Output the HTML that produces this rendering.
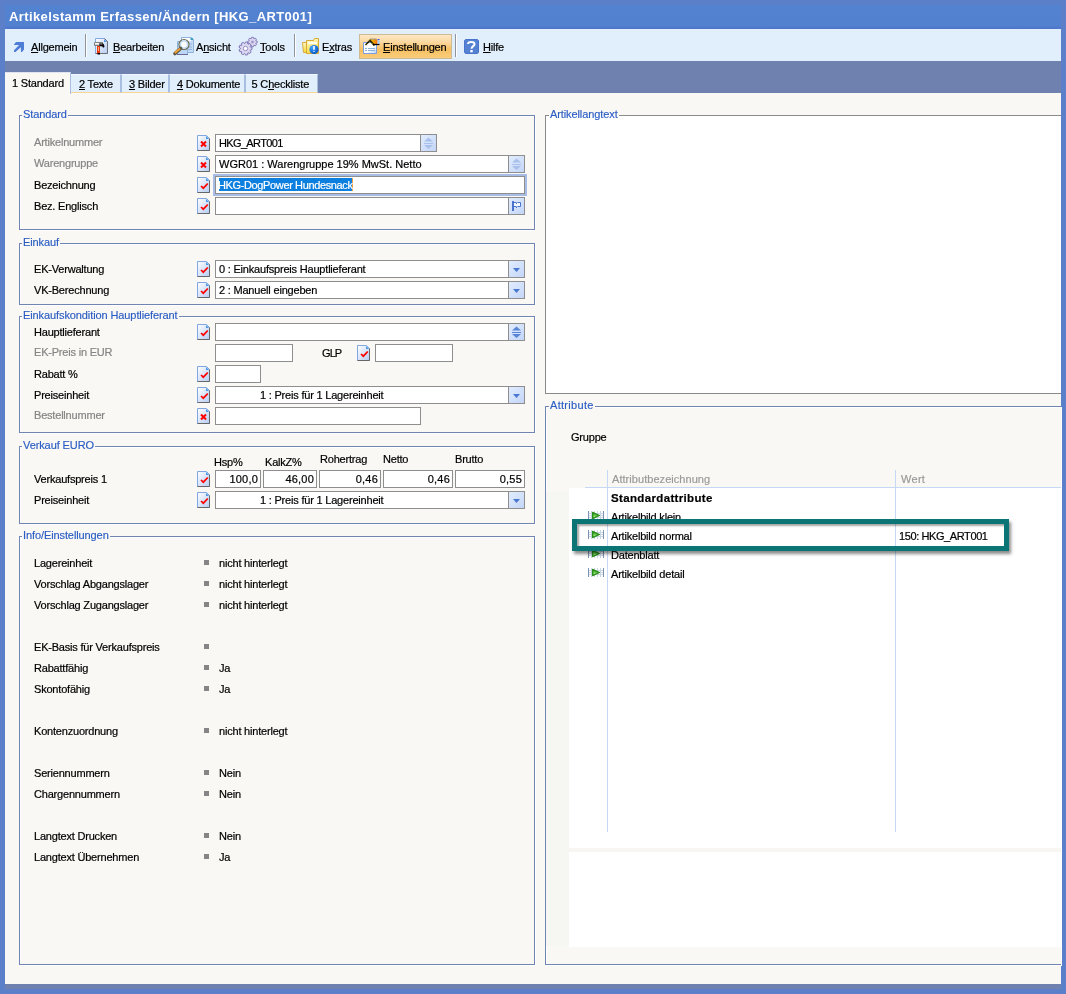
<!DOCTYPE html><html><head><meta charset="utf-8"><style>
*{margin:0;padding:0;box-sizing:border-box}
html,body{width:1066px;height:994px;overflow:hidden;background:#5b7fc8;font-family:"Liberation Sans",sans-serif;font-size:11px;color:#000}
.a{position:absolute}
svg{position:absolute;display:block}
.t{position:absolute;font-size:11px;line-height:13px;white-space:pre;letter-spacing:-0.2px;-webkit-text-stroke:0.2px currentColor}
.g{color:#858585}
.u{text-decoration:underline}
.gb{position:absolute;border:1px solid #7185b3;box-shadow:inset 1px 1px 0 #fff,1px 1px 0 #fff}
.lg{position:absolute;font-size:11px;line-height:13px;white-space:pre;color:#2a5cc4;background:#f9f8f4;padding:0 1px 0 1px;letter-spacing:-0.1px;-webkit-text-stroke:0.15px currentColor}
.in{position:absolute;border:1px solid #8e8e8e;background:#fff;height:18px}
.bt{position:absolute;top:0;right:0;width:16px;height:16px;border-left:1px solid #8e8e8e;background:linear-gradient(135deg,#e2ecfd,#c3d6f8)}
.bul{position:absolute;width:5px;height:5px;background:#858585}
.sep{position:absolute;width:2px;border-left:1px solid #8f949a;border-right:1px solid #fff}
</style></head><body><div id="root" style="position:absolute;left:0;top:0;width:1066px;height:994px;will-change:transform">
<svg width="0" height="0" style="position:absolute"><defs><linearGradient id="dg" x1="0" y1="0" x2="1" y2="1"><stop offset="0" stop-color="#ffffff"/><stop offset="1" stop-color="#b4ccf4"/></linearGradient><linearGradient id="og" x1="0" y1="0" x2="0" y2="1"><stop offset="0" stop-color="#fde3b0"/><stop offset="1" stop-color="#f8c27a"/></linearGradient><radialGradient id="gr" cx="0.3" cy="0.75" r="0.6"><stop offset="0" stop-color="#9cf080"/><stop offset="1" stop-color="#32a01c"/></radialGradient></defs></svg>
<div class="a" style="left:5px;top:5px;width:1056px;height:24px;background:linear-gradient(#5382d0,#5281d0 85%,#4f74cb)"></div>
<div class="a" style="left:9px;top:9px;font-size:13px;font-weight:bold;line-height:16px;color:#fff;letter-spacing:0.4px;white-space:pre">Artikelstamm Erfassen/Ändern [HKG_ART001]</div>
<div class="a" style="left:5px;top:29px;width:1056px;height:32px;background:#e1eefb"></div>
<div class="a" style="left:5px;top:61px;width:1056px;height:32px;background:#6f81ae"></div>
<div class="a" style="left:5px;top:93px;width:1056px;height:891px;background:#f9f8f4"></div>
<div class="a" style="left:5px;top:984px;width:1056px;height:5px;background:#6f81ae"></div>
<div class="a" style="left:359px;top:34px;width:93px;height:25px;border:1px solid #cdbb96;background:linear-gradient(#fde7c6,#fbd699 35%,#f7c062 62%,#f9cc7a)"></div>
<div class="sep" style="left:85px;top:34px;height:23px"></div>
<div class="sep" style="left:294px;top:34px;height:23px"></div>
<div class="sep" style="left:455px;top:34px;height:23px"></div>
<svg style="left:13px;top:41px" width="12" height="12"><path d="M3 1H11V8.5L9 11H8L7.8 6.2L2.5 11H1V9.2L6 4H1V3.5Z" fill="#4f7ed6"/></svg>
<svg style="left:93px;top:37px" width="16" height="19"><path d="M2.5 1.5H11.5L14.5 4.5V16.5H2.5Z" fill="url(#dg)" stroke="#86a8e0"/><path d="M11.5 1.5L14.5 4.5V16.5H2.5" fill="none" stroke="#707070"/><path d="M11 2V5H14Z" fill="#4a9ae8"/><path d="M1.5 5.5H9.5V8.5H1.5Z" fill="#d0d0d0" stroke="#808080"/><path d="M2 6.5H7" stroke="#fff"/><path d="M6.5 8.5H8.5Q10.5 8.5 10.5 10.5" fill="none" stroke="#000" stroke-width="1.4"/><path d="M6 7H9.5Q10.8 7 10.8 10" fill="none" stroke="#000" stroke-width="1.2"/><rect x="4" y="9" width="3" height="8" fill="#e83a10"/><rect x="5" y="10" width="1" height="4" fill="#ffb070"/><rect x="4.5" y="16" width="2.5" height="1.5" fill="#000"/></svg>
<svg style="left:172px;top:36px" width="24" height="20"><path d="M9.5 1.5H19.5L21.5 3.5V16.5H9.5Z" fill="#c4daf6" stroke="#8fb2da"/><path d="M10 2H19V5H10Z" fill="#fff"/><path d="M18.5 2H21V4H18.5Z" fill="#3aa0c0"/><path d="M16 8H20M16 11H20M16 13.5H20" stroke="#8fb2da"/><path d="M5.5 5.5H15.5V18.5H5.5Z" fill="#bcd6f6" stroke="#90b4e0"/><path d="M5 18.5H16" stroke="#6a6a98"/><circle cx="12" cy="8.5" r="5" fill="#fff" stroke="#6c6c50" stroke-width="1.2"/><circle cx="12" cy="8.5" r="3.6" fill="none" stroke="#b8d4f4" stroke-width="1.4"/><path d="M8.5 12.5L3 17.5" stroke="#5a5a48" stroke-width="3.6" stroke-linecap="round"/><path d="M8 12.5L2.8 17" stroke="#f4a030" stroke-width="2"/></svg>
<svg style="left:238px;top:36px" width="20" height="20"><path d="M17.88 4.76L19.23 5.16L19.23 6.84L17.88 7.24L17.77 7.51L18.44 8.75L17.25 9.94L16.01 9.27L15.74 9.38L15.34 10.73L13.66 10.73L13.26 9.38L12.99 9.27L11.75 9.94L10.56 8.75L11.23 7.51L11.12 7.24L9.77 6.84L9.77 5.16L11.12 4.76L11.23 4.49L10.56 3.25L11.75 2.06L12.99 2.73L13.26 2.62L13.66 1.27L15.34 1.27L15.74 2.62L16.01 2.73L17.25 2.06L18.44 3.25L17.77 4.49Z" fill="#d8d4ee" stroke="#7c76b6" stroke-width="0.9"/><circle cx="14.5" cy="6" r="1.3" fill="#9a94c8"/><path d="M12.26 10.96L14.02 11.47L14.02 13.53L12.26 14.04L12.13 14.38L13.15 15.90L11.83 17.48L10.16 16.74L9.84 16.92L9.64 18.74L7.62 19.10L6.81 17.45L6.45 17.39L5.13 18.66L3.35 17.63L3.79 15.85L3.56 15.57L1.73 15.70L1.02 13.76L2.50 12.68L2.50 12.32L1.02 11.24L1.73 9.30L3.56 9.43L3.79 9.15L3.35 7.37L5.13 6.34L6.45 7.61L6.81 7.55L7.62 5.90L9.64 6.26L9.84 8.08L10.16 8.26L11.83 7.52L13.15 9.10L12.13 10.62Z" fill="#dcd8f0" stroke="#736cb0" stroke-width="0.9"/><circle cx="7.5" cy="12.5" r="2.2" fill="#fff" stroke="#8a84c0" stroke-width="0.9"/></svg>
<svg style="left:300px;top:36px" width="20" height="20"><defs><linearGradient id="fy" x1="0" y1="0" x2="0.3" y2="1"><stop offset="0" stop-color="#fffbe0"/><stop offset="1" stop-color="#f8dc40"/></linearGradient><radialGradient id="bl" cx="0.35" cy="0.3" r="0.7"><stop offset="0" stop-color="#40a8ff"/><stop offset="1" stop-color="#0858c8"/></radialGradient></defs><path d="M2.5 6.5H6.5V16.5H3.5Z" fill="url(#fy)" stroke="#d8aa38"/><path d="M6.5 17.5V4.5H13.5L14.5 2.5H18.5V17.5Z" fill="url(#fy)" stroke="#d8aa38"/><path d="M8 6H17V8H8Z" fill="#fffff0"/><circle cx="14" cy="13.5" r="4.6" fill="url(#bl)"/><path d="M14 10V13.8" stroke="#fff" stroke-width="1.6"/><rect x="13.3" y="14.8" width="1.4" height="1.2" fill="#cfe4ff"/></svg>
<svg style="left:360px;top:36px" width="22" height="20"><defs><linearGradient id="ew" x1="0" y1="0" x2="1" y2="1"><stop offset="0.55" stop-color="#fff"/><stop offset="1" stop-color="#b4d0f4"/></linearGradient><linearGradient id="eo" x1="0" y1="0" x2="1" y2="0"><stop offset="0" stop-color="#f4d800"/><stop offset="1" stop-color="#f07010"/></linearGradient></defs><path d="M3.5 6.5H16.5V17.5H3.5Z" fill="url(#ew)" stroke="#7a9ee0"/><path d="M5 12.5H7M8 12.5H15M5 14.5H7M8 14.5H15" stroke="#8cb0da"/><path d="M9.5 3H16L17.5 4V8.5H12Z" fill="url(#eo)"/><path d="M10 3H16.5" stroke="#9a9a9a"/><rect x="17.5" y="3" width="2" height="5.5" fill="#a8c8f8"/><rect x="17.5" y="3" width="2" height="1" fill="#4a5ae0"/><path d="M5.5 9L10 4.5L14.5 9.5" fill="none" stroke="#000" stroke-width="1.6"/><path d="M5.5 9L10 4.5L14.5 9.5" fill="none" stroke="#f0d000" stroke-width="0.8" stroke-dasharray="1 1"/><path d="M13 8.5H19.5" stroke="#000" stroke-width="1.2"/></svg>
<svg style="left:464px;top:39px" width="15" height="15"><path d="M1.5 0.5H13.5L14.5 1.5V13.5L13.5 14.5H1.5L0.5 13.5V1.5Z" fill="#5581d3" stroke="#4a74cc"/><path d="M4 5C4 2.2 10.5 2.2 10.5 5.2C10.5 7.2 7.5 7.2 7.5 9.8" fill="none" stroke="#fff" stroke-width="2"/><rect x="6.3" y="11" width="2.4" height="2.3" fill="#fff"/></svg>
<div class="t" style="left:31px;top:41px;"><span class="u">A</span>llgemein</div>
<div class="t" style="left:113px;top:41px;"><span class="u">B</span>earbeiten</div>
<div class="t" style="left:196px;top:41px;">A<span class="u">n</span>sicht</div>
<div class="t" style="left:260px;top:41px;"><span class="u">T</span>ools</div>
<div class="t" style="left:322px;top:41px;">E<span class="u">x</span>tras</div>
<div class="t" style="left:383px;top:41px;"><span class="u">E</span>instellungen</div>
<div class="t" style="left:483px;top:41px;"><span class="u">H</span>ilfe</div>
<div class="a" style="left:70px;top:74px;width:51px;height:19px;background:#e1eefb;border-left:1px solid #a9bfdf;border-right:1px solid #a9bfdf;border-bottom:1px solid #f8d590;border-top:1px solid #eef6fe"></div>
<div class="t" style="left:79px;top:78px;"><span class="u">2</span> Texte</div>
<div class="a" style="left:121px;top:74px;width:48px;height:19px;background:#e1eefb;border-left:1px solid #a9bfdf;border-right:1px solid #a9bfdf;border-bottom:1px solid #f8d590;border-top:1px solid #eef6fe"></div>
<div class="t" style="left:129px;top:78px;"><span class="u">3</span> Bilder</div>
<div class="a" style="left:169px;top:74px;width:76px;height:19px;background:#e1eefb;border-left:1px solid #a9bfdf;border-right:1px solid #a9bfdf;border-bottom:1px solid #f8d590;border-top:1px solid #eef6fe"></div>
<div class="t" style="left:177px;top:78px;"><span class="u">4</span> Dokumente</div>
<div class="a" style="left:245px;top:74px;width:73px;height:19px;background:#e1eefb;border-left:1px solid #a9bfdf;border-right:1px solid #a9bfdf;border-bottom:1px solid #f8d590;border-top:1px solid #eef6fe"></div>
<div class="t" style="left:251.6px;top:78px;">5 C<span class="u">h</span>eckliste</div>
<div class="a" style="left:5px;top:72px;width:66px;height:22px;background:#f9f8f4;border-top:1px solid #dfe4ee;border-right:1px solid #a9bfdf"></div>
<div class="t" style="left:12px;top:77px;">1 Standard</div>
<div class="gb" style="left:19px;top:115px;width:516px;height:115px"></div>
<div class="lg" style="left:22px;top:108px">Standard</div>
<div class="gb" style="left:19px;top:243px;width:516px;height:62px"></div>
<div class="lg" style="left:22px;top:236px">Einkauf</div>
<div class="gb" style="left:19px;top:316px;width:516px;height:117px"></div>
<div class="lg" style="left:22px;top:309px">Einkaufskondition Hauptlieferant</div>
<div class="gb" style="left:19px;top:446px;width:516px;height:78px"></div>
<div class="lg" style="left:22px;top:439px">Verkauf EURO</div>
<div class="gb" style="left:19px;top:536px;width:516px;height:429px"></div>
<div class="lg" style="left:22px;top:529px">Info/Einstellungen</div>
<div class="a" style="left:545px;top:115px;width:516px;height:279px;border:1px solid #8a8a8a;border-right:none;background:#fff"></div>
<div class="lg" style="left:549px;top:108px;background:linear-gradient(#f9f8f4 0,#f9f8f4 7px,#fff 7px)">Artikellangtext</div>
<div class="gb" style="left:545px;top:406px;width:516px;height:559px;border-right:none"></div>
<div class="lg" style="left:549px;top:399px;letter-spacing:0.3px">Attribute</div>
<div class="t g" style="left:34px;top:136px;">Artikelnummer</div>
<svg style="left:197px;top:135px" width="13" height="16"><path d="M0.5 0.5H9.5L12.5 3.5V15.5H0.5Z" fill="url(#dg)" stroke="#82a7e0"/><path d="M12.5 3.5V15.5H0.5" fill="none" stroke="#666"/><path d="M9 1V4H12Z" fill="#4a9ae8"/><path d="M4 6.5L9 11.5M9 6.5L4 11.5" stroke="#f00" stroke-width="2"/></svg>
<div class="in" style="left:215px;top:134px;width:222px"><div class="t" style="left:3px;top:2px"><span style="letter-spacing:-0.65px">HKG_ART001</span></div><div class="bt"><svg style="left:3px;top:2px" width="10" height="13"><path d="M4.5 0.5L9 4.5H0Z" fill="#a9c0ea"/><path d="M0 6.5H9" stroke="#a9c0ea"/><path d="M0 8H9L4.5 12Z" fill="#a9c0ea"/></svg></div></div>
<div class="t g" style="left:34px;top:157px;">Warengruppe</div>
<svg style="left:197px;top:156px" width="13" height="16"><path d="M0.5 0.5H9.5L12.5 3.5V15.5H0.5Z" fill="url(#dg)" stroke="#82a7e0"/><path d="M12.5 3.5V15.5H0.5" fill="none" stroke="#666"/><path d="M9 1V4H12Z" fill="#4a9ae8"/><path d="M4 6.5L9 11.5M9 6.5L4 11.5" stroke="#f00" stroke-width="2"/></svg>
<div class="in" style="left:215px;top:155px;width:310px"><div class="t" style="left:3px;top:2px"><span style="letter-spacing:0">WGR01 : Warengruppe 19% MwSt. Netto</span></div><div class="bt"><svg style="left:3px;top:2px" width="10" height="13"><path d="M4.5 0.5L9 4.5H0Z" fill="#a9c0ea"/><path d="M0 6.5H9" stroke="#a9c0ea"/><path d="M0 8H9L4.5 12Z" fill="#a9c0ea"/></svg></div></div>
<div class="t" style="left:34px;top:179px;">Bezeichnung</div>
<svg style="left:197px;top:177px" width="13" height="16"><path d="M0.5 0.5H9.5L12.5 3.5V15.5H0.5Z" fill="url(#dg)" stroke="#82a7e0"/><path d="M12.5 3.5V15.5H0.5" fill="none" stroke="#666"/><path d="M9 1V4H12Z" fill="#4a9ae8"/><path d="M4 9L6.3 11.2L10.8 6.5" stroke="#f00" stroke-width="1.7" fill="none"/></svg>
<div class="in" style="left:215px;top:176px;width:310px;box-shadow:0 0 0 2px #a7bde6"><div class="a" style="left:3px;top:1px;width:134px;height:13px;background:#0c7fdf"></div><div class="a" style="left:136px;top:1px;width:1px;height:13px;background:#f0a040"></div><div class="t" style="left:2px;top:2px;color:#fff;letter-spacing:-0.37px">HKG-DogPower Hundesnack</div></div>
<div class="t" style="left:34px;top:200px;">Bez. Englisch</div>
<svg style="left:197px;top:198px" width="13" height="16"><path d="M0.5 0.5H9.5L12.5 3.5V15.5H0.5Z" fill="url(#dg)" stroke="#82a7e0"/><path d="M12.5 3.5V15.5H0.5" fill="none" stroke="#666"/><path d="M9 1V4H12Z" fill="#4a9ae8"/><path d="M4 9L6.3 11.2L10.8 6.5" stroke="#f00" stroke-width="1.7" fill="none"/></svg>
<div class="in" style="left:215px;top:197px;width:310px"><div class="bt"><svg style="left:3px;top:2px" width="12" height="12"><rect x="0" y="1" width="2" height="10" fill="#4a74cc"/><path d="M2 2.5H4.5M5.5 2.5H8.5V6.5H5.5M4.5 6.5H2" fill="none" stroke="#4a74cc"/><path d="M2 3H8V6H2Z" fill="#f4f8ff"/><rect x="4" y="3" width="1" height="1" fill="#4a74cc"/><rect x="4" y="7" width="1" height="1" fill="#4a74cc"/></svg></div></div>
<div class="t" style="left:34px;top:263px;">EK-Verwaltung</div>
<svg style="left:197px;top:261px" width="13" height="16"><path d="M0.5 0.5H9.5L12.5 3.5V15.5H0.5Z" fill="url(#dg)" stroke="#82a7e0"/><path d="M12.5 3.5V15.5H0.5" fill="none" stroke="#666"/><path d="M9 1V4H12Z" fill="#4a9ae8"/><path d="M4 9L6.3 11.2L10.8 6.5" stroke="#f00" stroke-width="1.7" fill="none"/></svg>
<div class="in" style="left:215px;top:260px;width:310px"><div class="t" style="left:3px;top:2px">0 : Einkaufspreis Hauptlieferant</div><div class="bt"><svg style="left:4px;top:7px" width="8" height="5"><path d="M0 0H7L3.5 4Z" fill="#4a78d0"/></svg></div></div>
<div class="t" style="left:34px;top:284px;">VK-Berechnung</div>
<svg style="left:197px;top:282px" width="13" height="16"><path d="M0.5 0.5H9.5L12.5 3.5V15.5H0.5Z" fill="url(#dg)" stroke="#82a7e0"/><path d="M12.5 3.5V15.5H0.5" fill="none" stroke="#666"/><path d="M9 1V4H12Z" fill="#4a9ae8"/><path d="M4 9L6.3 11.2L10.8 6.5" stroke="#f00" stroke-width="1.7" fill="none"/></svg>
<div class="in" style="left:215px;top:281px;width:310px"><div class="t" style="left:3px;top:2px">2 : Manuell eingeben</div><div class="bt"><svg style="left:4px;top:7px" width="8" height="5"><path d="M0 0H7L3.5 4Z" fill="#4a78d0"/></svg></div></div>
<div class="t" style="left:34px;top:326px;">Hauptlieferant</div>
<svg style="left:197px;top:324px" width="13" height="16"><path d="M0.5 0.5H9.5L12.5 3.5V15.5H0.5Z" fill="url(#dg)" stroke="#82a7e0"/><path d="M12.5 3.5V15.5H0.5" fill="none" stroke="#666"/><path d="M9 1V4H12Z" fill="#4a9ae8"/><path d="M4 9L6.3 11.2L10.8 6.5" stroke="#f00" stroke-width="1.7" fill="none"/></svg>
<div class="in" style="left:215px;top:323px;width:310px"><div class="bt"><svg style="left:3px;top:2px" width="10" height="13"><path d="M4.5 0.5L9 4.5H0Z" fill="#5a84d4"/><path d="M0 6.5H9" stroke="#5a84d4"/><path d="M0 8H9L4.5 12Z" fill="#5a84d4"/></svg></div></div>
<div class="t g" style="left:34px;top:346px;">EK-Preis in EUR</div>
<div class="in" style="left:215px;top:344px;width:78px"></div>
<div class="t" style="left:34px;top:368px;">Rabatt %</div>
<svg style="left:197px;top:366px" width="13" height="16"><path d="M0.5 0.5H9.5L12.5 3.5V15.5H0.5Z" fill="url(#dg)" stroke="#82a7e0"/><path d="M12.5 3.5V15.5H0.5" fill="none" stroke="#666"/><path d="M9 1V4H12Z" fill="#4a9ae8"/><path d="M4 9L6.3 11.2L10.8 6.5" stroke="#f00" stroke-width="1.7" fill="none"/></svg>
<div class="in" style="left:215px;top:365px;width:46px"></div>
<div class="t" style="left:34px;top:389px;">Preiseinheit</div>
<svg style="left:197px;top:387px" width="13" height="16"><path d="M0.5 0.5H9.5L12.5 3.5V15.5H0.5Z" fill="url(#dg)" stroke="#82a7e0"/><path d="M12.5 3.5V15.5H0.5" fill="none" stroke="#666"/><path d="M9 1V4H12Z" fill="#4a9ae8"/><path d="M4 9L6.3 11.2L10.8 6.5" stroke="#f00" stroke-width="1.7" fill="none"/></svg>
<div class="in" style="left:215px;top:386px;width:310px"><div class="bt"><svg style="left:4px;top:7px" width="8" height="5"><path d="M0 0H7L3.5 4Z" fill="#4a78d0"/></svg></div></div>
<div class="t" style="left:260px;top:389px;">1 : Preis für 1 Lagereinheit</div>
<div class="t g" style="left:34px;top:409px;">Bestellnummer</div>
<svg style="left:197px;top:408px" width="13" height="16"><path d="M0.5 0.5H9.5L12.5 3.5V15.5H0.5Z" fill="url(#dg)" stroke="#82a7e0"/><path d="M12.5 3.5V15.5H0.5" fill="none" stroke="#666"/><path d="M9 1V4H12Z" fill="#4a9ae8"/><path d="M4 6.5L9 11.5M9 6.5L4 11.5" stroke="#f00" stroke-width="2"/></svg>
<div class="in" style="left:215px;top:407px;width:206px"></div>
<div class="t" style="left:34px;top:473px;">Verkaufspreis 1</div>
<svg style="left:197px;top:471px" width="13" height="16"><path d="M0.5 0.5H9.5L12.5 3.5V15.5H0.5Z" fill="url(#dg)" stroke="#82a7e0"/><path d="M12.5 3.5V15.5H0.5" fill="none" stroke="#666"/><path d="M9 1V4H12Z" fill="#4a9ae8"/><path d="M4 9L6.3 11.2L10.8 6.5" stroke="#f00" stroke-width="1.7" fill="none"/></svg>
<div class="in" style="left:215px;top:470px;width:46px"><div class="t" style="right:2px;top:2px;letter-spacing:0.2px">100,0</div></div>
<div class="t" style="left:34px;top:494px;">Preiseinheit</div>
<svg style="left:197px;top:492px" width="13" height="16"><path d="M0.5 0.5H9.5L12.5 3.5V15.5H0.5Z" fill="url(#dg)" stroke="#82a7e0"/><path d="M12.5 3.5V15.5H0.5" fill="none" stroke="#666"/><path d="M9 1V4H12Z" fill="#4a9ae8"/><path d="M4 9L6.3 11.2L10.8 6.5" stroke="#f00" stroke-width="1.7" fill="none"/></svg>
<div class="in" style="left:215px;top:491px;width:310px"><div class="bt"><svg style="left:4px;top:7px" width="8" height="5"><path d="M0 0H7L3.5 4Z" fill="#4a78d0"/></svg></div></div>
<div class="t" style="left:260px;top:494px;">1 : Preis für 1 Lagereinheit</div>
<div class="t" style="left:322px;top:347px;;letter-spacing:-0.9px">GLP</div>
<svg style="left:357px;top:345px" width="13" height="16"><path d="M0.5 0.5H9.5L12.5 3.5V15.5H0.5Z" fill="url(#dg)" stroke="#82a7e0"/><path d="M12.5 3.5V15.5H0.5" fill="none" stroke="#666"/><path d="M9 1V4H12Z" fill="#4a9ae8"/><path d="M4 9L6.3 11.2L10.8 6.5" stroke="#f00" stroke-width="1.7" fill="none"/></svg>
<div class="in" style="left:375px;top:344px;width:78px"></div>
<div class="t" style="left:214px;top:456px;">Hsp%</div>
<div class="t" style="left:265px;top:456px;">KalkZ%</div>
<div class="t" style="left:320px;top:453px;">Rohertrag</div>
<div class="t" style="left:383px;top:453px;">Netto</div>
<div class="t" style="left:455px;top:453px;">Brutto</div>
<div class="in" style="left:263px;top:470px;width:54px"><div class="t" style="right:2px;top:2px;letter-spacing:0.2px">46,00</div></div>
<div class="in" style="left:319px;top:470px;width:62px"><div class="t" style="right:2px;top:2px;letter-spacing:0.2px">0,46</div></div>
<div class="in" style="left:383px;top:470px;width:70px"><div class="t" style="right:2px;top:2px;letter-spacing:0.2px">0,46</div></div>
<div class="in" style="left:455px;top:470px;width:70px"><div class="t" style="right:2px;top:2px;letter-spacing:0.2px">0,55</div></div>
<div class="t" style="left:34px;top:557px;">Lagereinheit</div>
<div class="bul" style="left:204px;top:560px"></div>
<div class="t" style="left:219px;top:557px;">nicht hinterlegt</div>
<div class="t" style="left:34px;top:578px;">Vorschlag Abgangslager</div>
<div class="bul" style="left:204px;top:581px"></div>
<div class="t" style="left:219px;top:578px;">nicht hinterlegt</div>
<div class="t" style="left:34px;top:599px;">Vorschlag Zugangslager</div>
<div class="bul" style="left:204px;top:602px"></div>
<div class="t" style="left:219px;top:599px;">nicht hinterlegt</div>
<div class="t" style="left:34px;top:641px;">EK-Basis für Verkaufspreis</div>
<div class="bul" style="left:204px;top:644px"></div>
<div class="t" style="left:34px;top:662px;">Rabattfähig</div>
<div class="bul" style="left:204px;top:665px"></div>
<div class="t" style="left:219px;top:662px;">Ja</div>
<div class="t" style="left:34px;top:683px;">Skontofähig</div>
<div class="bul" style="left:204px;top:686px"></div>
<div class="t" style="left:219px;top:683px;">Ja</div>
<div class="t" style="left:34px;top:725px;">Kontenzuordnung</div>
<div class="bul" style="left:204px;top:728px"></div>
<div class="t" style="left:219px;top:725px;">nicht hinterlegt</div>
<div class="t" style="left:34px;top:767px;">Seriennummern</div>
<div class="bul" style="left:204px;top:770px"></div>
<div class="t" style="left:219px;top:767px;">Nein</div>
<div class="t" style="left:34px;top:788px;">Chargennummern</div>
<div class="bul" style="left:204px;top:791px"></div>
<div class="t" style="left:219px;top:788px;">Nein</div>
<div class="t" style="left:34px;top:830px;">Langtext Drucken</div>
<div class="bul" style="left:204px;top:833px"></div>
<div class="t" style="left:219px;top:830px;">Nein</div>
<div class="t" style="left:34px;top:851px;">Langtext Übernehmen</div>
<div class="bul" style="left:204px;top:854px"></div>
<div class="t" style="left:219px;top:851px;">Ja</div>
<div class="t" style="left:571px;top:431px;">Gruppe</div>
<div class="a" style="left:546px;top:492px;width:23px;height:454px;background:#f6f6f3"></div>
<div class="a" style="left:569px;top:488px;width:492px;height:459px;background:#fff"></div>
<div class="a" style="left:569px;top:848px;width:492px;height:4px;background:#f7f6f2"></div>
<div class="a" style="left:585px;top:487px;width:476px;height:1px;background:#c5d8f6"></div>
<div class="a" style="left:607px;top:470px;width:1px;height:362px;background:#c5d8f6"></div>
<div class="a" style="left:895px;top:470px;width:1px;height:362px;background:#c5d8f6"></div>
<div class="t" style="left:612px;top:473px;;color:#9a9a9a;letter-spacing:0.05px">Attributbezeichnung</div>
<div class="t" style="left:901px;top:473px;;color:#9a9a9a;letter-spacing:0.3px">Wert</div>
<div class="t" style="left:611px;top:492px;;font-weight:bold;font-size:11.5px;letter-spacing:0.35px">Standardattribute</div>
<svg style="left:588px;top:511px" width="16" height="9"><path d="M0.5 0V9M15.5 0V9" stroke="#7d93b3"/><path d="M3.5 0V9M6.5 0V9M9.5 0V9M12.5 0V9M1 2.5H15M1 4.5H15M1 6.5H15" stroke="#c9d6e6"/><path d="M4.6 1.4L11.4 4.5L4.6 7.6Z" fill="url(#gr)" stroke="#2b8c1a" stroke-width="1.3" stroke-linejoin="round"/></svg>
<div class="t" style="left:611px;top:511px;">Artikelbild klein</div>
<svg style="left:588px;top:530px" width="16" height="9"><path d="M0.5 0V9M15.5 0V9" stroke="#7d93b3"/><path d="M3.5 0V9M6.5 0V9M9.5 0V9M12.5 0V9M1 2.5H15M1 4.5H15M1 6.5H15" stroke="#c9d6e6"/><path d="M4.6 1.4L11.4 4.5L4.6 7.6Z" fill="url(#gr)" stroke="#2b8c1a" stroke-width="1.3" stroke-linejoin="round"/></svg>
<div class="t" style="left:611px;top:530px;">Artikelbild normal</div>
<svg style="left:588px;top:549px" width="16" height="9"><path d="M0.5 0V9M15.5 0V9" stroke="#7d93b3"/><path d="M3.5 0V9M6.5 0V9M9.5 0V9M12.5 0V9M1 2.5H15M1 4.5H15M1 6.5H15" stroke="#c9d6e6"/><path d="M4.6 1.4L11.4 4.5L4.6 7.6Z" fill="url(#gr)" stroke="#2b8c1a" stroke-width="1.3" stroke-linejoin="round"/></svg>
<div class="t" style="left:611px;top:549px;">Datenblatt</div>
<svg style="left:588px;top:568px" width="16" height="9"><path d="M0.5 0V9M15.5 0V9" stroke="#7d93b3"/><path d="M3.5 0V9M6.5 0V9M9.5 0V9M12.5 0V9M1 2.5H15M1 4.5H15M1 6.5H15" stroke="#c9d6e6"/><path d="M4.6 1.4L11.4 4.5L4.6 7.6Z" fill="url(#gr)" stroke="#2b8c1a" stroke-width="1.3" stroke-linejoin="round"/></svg>
<div class="t" style="left:611px;top:568px;">Artikelbild detail</div>
<div class="t" style="left:899px;top:530px;;letter-spacing:-0.4px">150: HKG_ART001</div>
<div class="a" style="left:572px;top:519px;width:437px;height:32px;border:5px solid #0b7474;box-shadow:2px 3px 3px rgba(0,0,0,0.45), inset 2px 2px 2px rgba(0,0,0,0.35)"></div>
</div></body></html>
